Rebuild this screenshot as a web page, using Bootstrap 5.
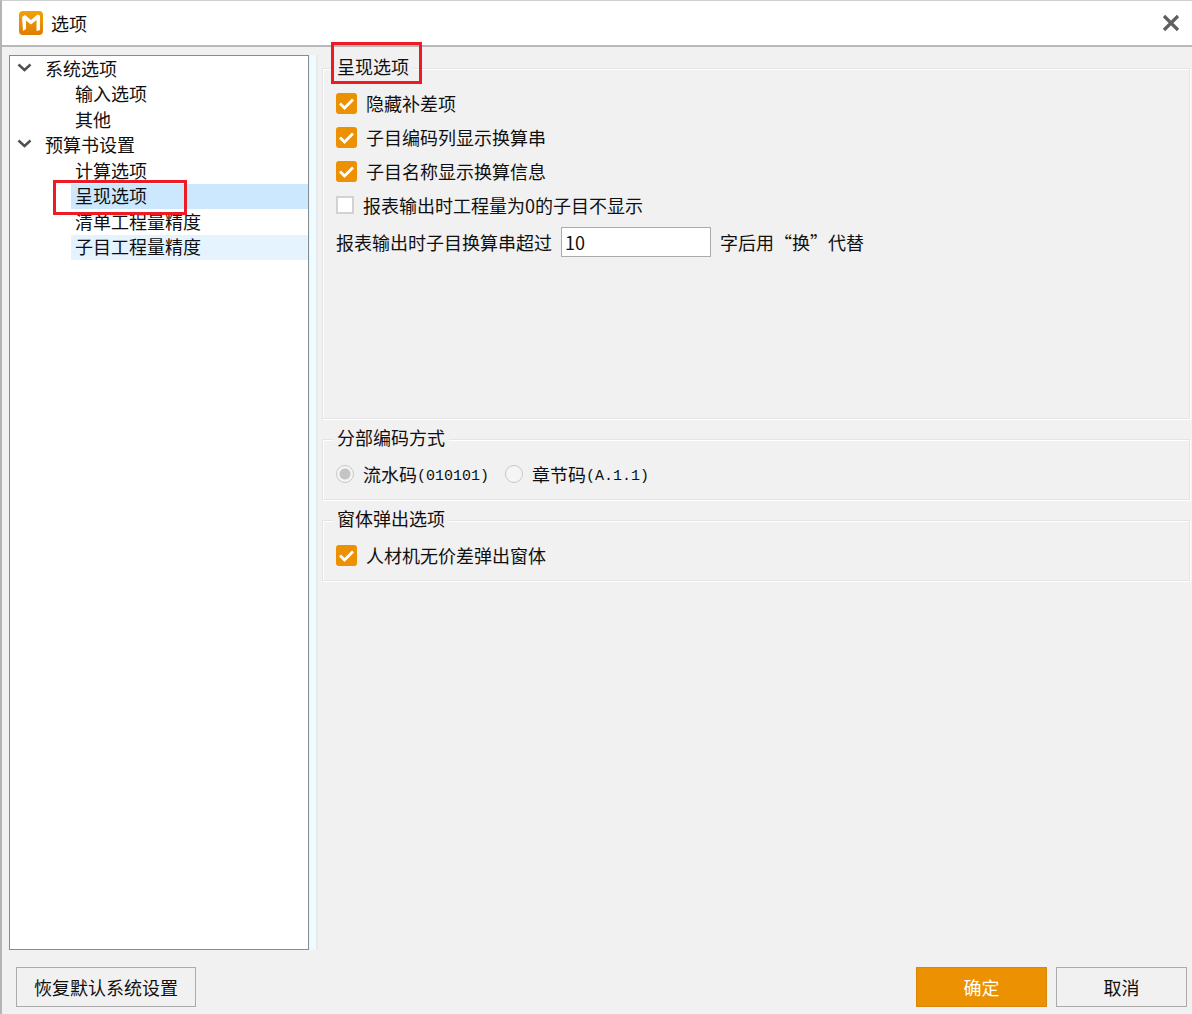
<!DOCTYPE html>
<html lang="zh-CN">
<head>
<meta charset="utf-8">
<meta name="viewport" content="width=device-width, initial-scale=1">
<title>选项</title>
<link href="https://cdn.jsdelivr.net/npm/bootstrap@5.3.0/dist/css/bootstrap.min.css" rel="stylesheet">
<style>
  body {
    font-family: "Noto Sans CJK SC", "Liberation Sans", sans-serif;
    font-size: 18px;
    line-height: 24px;
    color: #101010;
    background: #f1f1f1;
  }
  .dialog { border-top: 1px solid #cfcfcf; border-left: 2px solid #b4b4b4; }
  .title-bar { height: 46px; padding: 0 9px 0 17px; background: #fff; border-bottom: 2px solid #b9b9b9; }
  .title-bar h1 { font-size: 18px; line-height: 24px; }
  .close-btn { padding: 0; width: 24px; height: 24px; }

  .dialog-main { padding: 8px 2px 0 7px; }
  .tree-pane { width: 300px; background: #fff; border: 1px solid #868b94; }
  .tree { display: grid; grid-auto-rows: 1fr; height: 204px; line-height: 20px; }
  .tree-row { display: flex; align-items: center; padding: 0 0 2px 7px; }
  .tree-row svg { margin-right: 13px; }
  .tree-leaf { margin-left: 61px; padding: 0 0 2px 4px; color: inherit; text-decoration: none; position: relative; }
  .tree-leaf.is-current { background: #cce8ff; }
  .tree-leaf.is-hot { background: #e5f3ff; }
  .callout-box { position: absolute; border: 3px solid #ed1c24; z-index: 2; pointer-events: none; }
  .callout-tree { left: -18px; top: -4px; width: 134px; height: 35px; }
  .callout-legend { left: -2px; top: -15px; width: 91px; height: 42px; }
  .splitter { width: 8px; margin-left: 1px; background: #eefbff; border-right: 2px solid #e6eaec; }

  .panes { padding: 2px 0 0 4px; gap: 9px; }
  .group-box {
    border: 1px solid #e4e4e4;
    box-shadow: inset 1px 1px 0 #fff, 1px 1px 0 #fff;
    padding: 0 13px 13px;
  }
  .group-box legend {
    font-size: 18px; line-height: 18px; height: 22px;
    padding: 0 4px; margin: 0 0 12px -3px;
    background: #f1f1f1; position: relative;
  }
  .group-main { min-height: 362px; }
  .option-list { gap: 10px; }
  .option { height: 24px; }
  .option .form-check-input { margin: 0; width: 18px; height: 18px; border: 2px solid #d2d2d2; background-color: #fff; }
  .option .form-check-input[type=checkbox] { border-radius: 0; }
  .option .form-check-input[type=checkbox]:checked {
    width: 21px; height: 21px; border: 0; border-radius: 3px;
    background-color: #eb9102; background-size: 21px 21px;
    background-image: url("data:image/svg+xml,%3Csvg xmlns='http://www.w3.org/2000/svg' viewBox='0 0 21 21'%3E%3Cpath d='M4 10.5l4.5 4.5L17 6.500' fill='none' stroke='%23fff' stroke-width='2.800'/%3E%3C/svg%3E");
  }
  .option .form-check-input[type=radio] { opacity: 1; border: 1px solid #c8c8c8; background-color: #f5f5f5; }
  .option .form-check-input[type=radio]:checked {
    background-image: radial-gradient(circle, #c4c4c4 0, #c4c4c4 5px, transparent 6px);
    background-size: 100% 100%;
  }
  .option label, .option .form-check-input:disabled ~ label { margin-left: 9px; opacity: 1; }
  .code { font-family: "Liberation Mono", monospace; font-size: 15px; line-height: 1; vertical-align: 2px; }
  .limit-row { gap: 9px; }
  .num-box { width: 150px; height: 30px; padding: 0 3px; font-size: 18px; border: 1px solid #ababab; border-radius: 0; color: #101010; }

  .dialog-foot { padding: 17px 5px 7px 14px; gap: 9px; }
  .dialog-foot .btn { height: 40px; min-width: 131px; padding: 0 17px; font-size: 18px; line-height: 24px; border-radius: 0; border: 1px solid #ababab; color: #101010; background: #f1f1f1; }
  .dialog-foot .btn-ok { background: #eb9102; border-color: #d98809; color: #fff; }
</style>
<script src="https://cdn.jsdelivr.net/npm/bootstrap@5.3.0/dist/js/bootstrap.bundle.min.js"></script>
</head>
<body>
<div class="dialog d-flex flex-column min-vh-100">
  <header class="title-bar d-flex align-items-center">
    <svg width="24" height="24" viewBox="0 0 24 24" aria-hidden="true">
      <defs><linearGradient id="logoFill" x1="0" y1="0" x2="0" y2="1"><stop offset="0" stop-color="#f2a205"/><stop offset="1" stop-color="#e07c05"/></linearGradient></defs>
      <rect width="24" height="24" rx="4" fill="url(#logoFill)"/>
      <path d="M3 6L6 4l6 5 6.500-5.500L21 4.500V19l-3.500 1V9L12 13.500 7 9.500V18l-3 2z" fill="#fff"/>
    </svg>
    <h1 class="mb-0 ms-2 fw-normal">选项</h1>
    <button type="button" class="close-btn btn ms-auto border-0 d-flex align-items-center justify-content-center" aria-label="关闭">
      <svg width="18" height="18" viewBox="0 0 18 18"><path d="M2 2l14 14M16 2L2 16" stroke="#5f5f5f" stroke-width="3.200"/></svg>
    </button>
  </header>

  <main class="dialog-main d-flex flex-grow-1">
    <nav class="tree-pane flex-shrink-0" aria-label="选项分类">
      <div class="tree">
        <div class="tree-row"><svg width="15" height="10" viewBox="0 0 15 10"><path d="M1.500 1.500l6 5.500 6-5.500" fill="none" stroke="#505050" stroke-width="2.400"/></svg>系统选项</div>
        <a href="#" class="tree-leaf d-flex align-items-center">输入选项</a>
        <a href="#" class="tree-leaf d-flex align-items-center">其他</a>
        <div class="tree-row"><svg width="15" height="10" viewBox="0 0 15 10"><path d="M1.500 1.500l6 5.500 6-5.500" fill="none" stroke="#505050" stroke-width="2.400"/></svg>预算书设置</div>
        <a href="#" class="tree-leaf d-flex align-items-center">计算选项</a>
        <a href="#" class="tree-leaf is-current d-flex align-items-center" aria-current="page">呈现选项<span class="callout-box callout-tree"></span></a>
        <a href="#" class="tree-leaf d-flex align-items-center">清单工程量精度</a>
        <a href="#" class="tree-leaf is-hot d-flex align-items-center">子目工程量精度</a>
      </div>
    </nav>
    <div class="splitter flex-shrink-0"></div>

    <form class="panes d-flex flex-column flex-grow-1">
      <fieldset class="group-box group-main">
        <legend class="float-none w-auto">呈现选项<span class="callout-box callout-legend"></span></legend>
        <div class="option-list d-flex flex-column">
          <div class="option d-flex align-items-center"><input class="form-check-input" type="checkbox" id="hideDiff" checked><label for="hideDiff">隐藏补差项</label></div>
          <div class="option d-flex align-items-center"><input class="form-check-input" type="checkbox" id="codeCol" checked><label for="codeCol">子目编码列显示换算串</label></div>
          <div class="option d-flex align-items-center"><input class="form-check-input" type="checkbox" id="nameInfo" checked><label for="nameInfo">子目名称显示换算信息</label></div>
          <div class="option d-flex align-items-center"><input class="form-check-input" type="checkbox" id="zeroQty"><label for="zeroQty">报表输出时工程量为0的子目不显示</label></div>
          <div class="limit-row d-flex align-items-center">
            <label for="maxChars">报表输出时子目换算串超过</label>
            <input class="num-box form-control" type="text" id="maxChars" value="10">
            <span>字后用“换”代替</span>
          </div>
        </div>
      </fieldset>

      <fieldset class="group-box">
        <legend class="float-none w-auto">分部编码方式</legend>
        <div class="d-flex gap-3">
          <div class="option d-flex align-items-center"><input class="form-check-input" type="radio" name="codeMode" id="serial" checked disabled><label for="serial">流水码<span class="code">(010101)</span></label></div>
          <div class="option d-flex align-items-center"><input class="form-check-input" type="radio" name="codeMode" id="chapter" disabled><label for="chapter">章节码<span class="code">(A.1.1)</span></label></div>
        </div>
      </fieldset>

      <fieldset class="group-box">
        <legend class="float-none w-auto">窗体弹出选项</legend>
        <div class="option d-flex align-items-center"><input class="form-check-input" type="checkbox" id="popup" checked><label for="popup">人材机无价差弹出窗体</label></div>
      </fieldset>
    </form>
  </main>

  <footer class="dialog-foot d-flex">
    <button type="button" class="btn me-auto">恢复默认系统设置</button>
    <button type="button" class="btn btn-ok">确定</button>
    <button type="button" class="btn">取消</button>
  </footer>
</div>
</body>
</html>
